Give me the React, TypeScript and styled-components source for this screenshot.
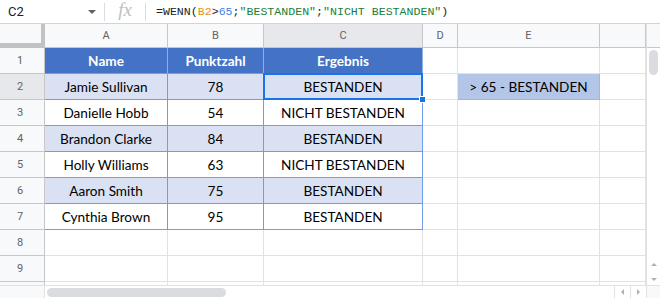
import React from 'react';
import styled, { createGlobalStyle, css } from 'styled-components';

const GlobalStyle = createGlobalStyle`
  html, body {
    margin: 0;
    padding: 0;
    background: #ffffff;
    overflow: hidden;
  }
  * { box-sizing: border-box; }
`;

const COLS = [45, 123, 96, 159, 35, 142, 46];
const LETTERS = ['A', 'B', 'C', 'D', 'E', ''];

const rows = [
  ['Jamie Sullivan', '78', 'BESTANDEN'],
  ['Danielle Hobb', '54', 'NICHT BESTANDEN'],
  ['Brandon Clarke', '84', 'BESTANDEN'],
  ['Holly Williams', '63', 'NICHT BESTANDEN'],
  ['Aaron Smith', '75', 'BESTANDEN'],
  ['Cynthia Brown', '95', 'BESTANDEN'],
];

type CellKind = 'plain' | 'head' | 'band' | 'table' | 'note';

const Page = styled.div`
  width: 660px;
  height: 298px;
  display: flex;
  flex-direction: column;
  background: #fff;
  font-family: Roboto, 'Liberation Sans', sans-serif;
`;

const FormulaBar = styled.div`
  height: 24px;
  display: flex;
  align-items: center;
  border-bottom: 1px solid #d3d3d3;
  flex-shrink: 0;
`;

const NameBox = styled.div`
  width: 104px;
  height: 100%;
  display: flex;
  align-items: center;
  justify-content: space-between;
  padding: 0 8px 0 8px;
  font-size: 13px;
  color: #202124;
`;

const Caret = styled.span`
  width: 0;
  height: 0;
  border-left: 4px solid transparent;
  border-right: 4px solid transparent;
  border-top: 4px solid #5f6368;
  margin-top: 1px;
`;

const Divider = styled.span`
  width: 1px;
  height: 18px;
  background: #dadce0;
`;

const Fx = styled.span`
  width: 40px;
  text-align: center;
  font-family: 'Liberation Serif', serif;
  font-style: italic;
  font-size: 19px;
  color: #c0c0c0;
  margin-top: -3px;
`;

const Formula = styled.div`
  padding-left: 10px;
  font-family: 'Liberation Mono', monospace;
  font-size: 11.6px;
  color: #202124;
  white-space: pre;
`;

const Tok = styled.span<{ $c: string }>`
  color: ${(p) => p.$c};
`;

const SheetArea = styled.div`
  display: flex;
  height: 261px;
  flex-shrink: 0;
  overflow: hidden;
`;

const Grid = styled.div`
  width: 646px;
  display: grid;
  grid-template-columns: ${COLS.map((c) => `${c}px`).join(' ')};
  grid-template-rows: 24px repeat(10, 26px);
  align-content: start;
`;

const Corner = styled.div`
  background: #f8f9fa;
  border-right: 4px solid #c2c2c2;
  border-bottom: 5px solid #c2c2c2;
`;

const ColHead = styled.div<{ $active?: boolean }>`
  background: ${(p) => (p.$active ? '#e6e8eb' : '#f8f9fa')};
  border-right: 1px solid #c7c7c7;
  border-bottom: 1px solid #c7c7c7;
  display: flex;
  align-items: center;
  justify-content: center;
  font-size: 11px;
  color: #5f6368;
`;

const RowHead = styled.div<{ $active?: boolean }>`
  background: ${(p) => (p.$active ? '#e6e8eb' : '#f8f9fa')};
  border-right: 1px solid #c7c7c7;
  border-bottom: 1px solid #c7c7c7;
  display: flex;
  align-items: center;
  justify-content: center;
  padding-right: 4px;
  font-size: 11px;
  color: #5f6368;
`;

const kindStyles: Record<CellKind, ReturnType<typeof css>> = {
  plain: css`
    background: #fff;
    border-right: 1px solid #e2e2e2;
    border-bottom: 1px solid #e2e2e2;
  `,
  head: css`
    background: #4472c4;
    color: #fff;
    font-weight: 700;
    border-right: 1px solid #8fb0e6;
    border-bottom: 1px solid #6d9eeb;
  `,
  band: css`
    background: #dae1f3;
    border-right: 1px solid #6d9eeb;
    border-bottom: 1px solid #6d9eeb;
  `,
  table: css`
    background: #fff;
    border-right: 1px solid #6d9eeb;
    border-bottom: 1px solid #6d9eeb;
  `,
  note: css`
    background: #b4c6e7;
    border-right: 1px solid #a3b6da;
    border-bottom: 1px solid #a3b6da;
  `,
};

const Cell = styled.div<{ $kind: CellKind; $selected?: boolean }>`
  position: relative;
  display: flex;
  align-items: center;
  justify-content: center;
  font-family: Lato, 'Open Sans', sans-serif;
  font-size: 13.6px;
  color: #000;
  white-space: nowrap;
  ${(p) => kindStyles[p.$kind]}

  ${(p) =>
    p.$selected &&
    css`
      &::after {
        content: '';
        position: absolute;
        left: -1px;
        top: -1px;
        right: -1px;
        bottom: -1px;
        border: 2px solid #1a73e8;
        pointer-events: none;
      }
    `}
`;

const Handle = styled.span`
  position: absolute;
  right: -4px;
  bottom: -4px;
  width: 7px;
  height: 7px;
  background: #1a73e8;
  border: 1px solid #fff;
  z-index: 2;
`;

const VScroll = styled.div`
  width: 14px;
  display: flex;
  flex-direction: column;
  border-left: 1px solid #e2e2e2;
  background: #fff;
`;

const VScrollTop = styled.div`
  height: 24px;
  background: #f8f9fa;
  border-bottom: 1px solid #c7c7c7;
  flex-shrink: 0;
`;

const VTrack = styled.div`
  flex: 1;
  display: flex;
  flex-direction: column;
  padding: 2px 2px 0 2px;
`;

const VThumb = styled.div`
  width: 9px;
  height: 25px;
  border-radius: 5px;
  background: #dadce0;
`;

const Arrows = styled.div`
  margin-top: auto;
  display: flex;
  flex-direction: column;
  align-items: center;
  gap: 12px;
  padding-bottom: 4px;
`;

const Tri = styled.span<{ $dir: 'up' | 'down' | 'left' | 'right' }>`
  width: 0;
  height: 0;
  ${(p) =>
    p.$dir === 'up'
      ? css`border-left: 3px solid transparent; border-right: 3px solid transparent; border-bottom: 3px solid #b0b0b0;`
      : p.$dir === 'down'
      ? css`border-left: 3px solid transparent; border-right: 3px solid transparent; border-top: 3px solid #b0b0b0;`
      : p.$dir === 'left'
      ? css`border-top: 3px solid transparent; border-bottom: 3px solid transparent; border-right: 3px solid #b0b0b0;`
      : css`border-top: 3px solid transparent; border-bottom: 3px solid transparent; border-left: 3px solid #b0b0b0;`}
`;

const HScroll = styled.div`
  height: 13px;
  display: flex;
  border-top: 1px solid #e2e2e2;
  background: #fff;
  flex-shrink: 0;
`;

const HLeft = styled.div`
  width: 45px;
  border-right: 1px solid #e2e2e2;
  background: #f8f9fa;
`;

const HTrack = styled.div`
  flex: 1;
  display: flex;
  align-items: center;
  padding-left: 2px;
`;

const HThumb = styled.div`
  width: 179px;
  height: 9px;
  border-radius: 5px;
  background: #dadce0;
`;

const HArrows = styled.div`
  display: flex;
  align-items: center;
  height: 100%;
  margin-left: auto;
`;

const HArrowBox = styled.div`
  width: 16px;
  height: 100%;
  display: flex;
  align-items: center;
  justify-content: center;
  border-left: 1px solid #e2e2e2;
`;

const HCorner = styled.div`
  width: 14px;
  border-left: 1px solid #e2e2e2;
  background: #f8f9fa;
`;

const gridRow = (r: number) => {
  const cells: React.ReactNode[] = [];
  const active = r === 2;
  cells.push(
    <RowHead key={`h${r}`} $active={active}>
      {r < 10 ? r : ''}
    </RowHead>
  );
  if (r === 1) {
    ['Name', 'Punktzahl', 'Ergebnis'].forEach((t) =>
      cells.push(
        <Cell key={`t${t}`} $kind="head">
          {t}
        </Cell>
      )
    );
  } else if (r <= 7) {
    const data = rows[r - 2];
    const kind: CellKind = r % 2 === 0 ? 'band' : 'table';
    data.forEach((t, i) =>
      cells.push(
        <Cell key={`d${r}${i}`} $kind={kind} $selected={r === 2 && i === 2}>
          {t}
          {r === 2 && i === 2 && <Handle />}
        </Cell>
      )
    );
  } else {
    for (let i = 0; i < 3; i++) cells.push(<Cell key={`e${r}${i}`} $kind="plain" />);
  }
  cells.push(<Cell key={`D${r}`} $kind="plain" />);
  if (r === 2) {
    cells.push(
      <Cell key={`E${r}`} $kind="note">
        &gt; 65 - BESTANDEN
      </Cell>
    );
  } else {
    cells.push(<Cell key={`E${r}`} $kind="plain" />);
  }
  cells.push(<Cell key={`F${r}`} $kind="plain" />);
  return cells;
};

export default function App() {
  return (
    <>
      <GlobalStyle />
      <Page>
        <FormulaBar>
          <NameBox>
            <span>C2</span>
            <Caret />
          </NameBox>
          <Divider />
          <Fx>fx</Fx>
          <Divider />
          <Formula>
            =WENN(<Tok $c="#e8910c">B2</Tok>&gt;<Tok $c="#3d7fe0">65</Tok>;
            <Tok $c="#188038">"BESTANDEN"</Tok>;<Tok $c="#188038">"NICHT BESTANDEN"</Tok>)
          </Formula>
        </FormulaBar>
        <SheetArea>
          <Grid>
            <Corner />
            {LETTERS.map((l, i) => (
              <ColHead key={i} $active={l === 'C'}>
                {l}
              </ColHead>
            ))}
            {Array.from({ length: 10 }, (_, i) => gridRow(i + 1))}
          </Grid>
          <VScroll>
            <VScrollTop />
            <VTrack>
              <VThumb />
              <Arrows>
                <Tri $dir="up" />
                <Tri $dir="down" />
              </Arrows>
            </VTrack>
          </VScroll>
        </SheetArea>
        <HScroll>
          <HLeft />
          <HTrack>
            <HThumb />
            <HArrows>
              <HArrowBox>
                <Tri $dir="left" />
              </HArrowBox>
              <HArrowBox>
                <Tri $dir="right" />
              </HArrowBox>
            </HArrows>
          </HTrack>
          <HCorner />
        </HScroll>
      </Page>
    </>
  );
}
